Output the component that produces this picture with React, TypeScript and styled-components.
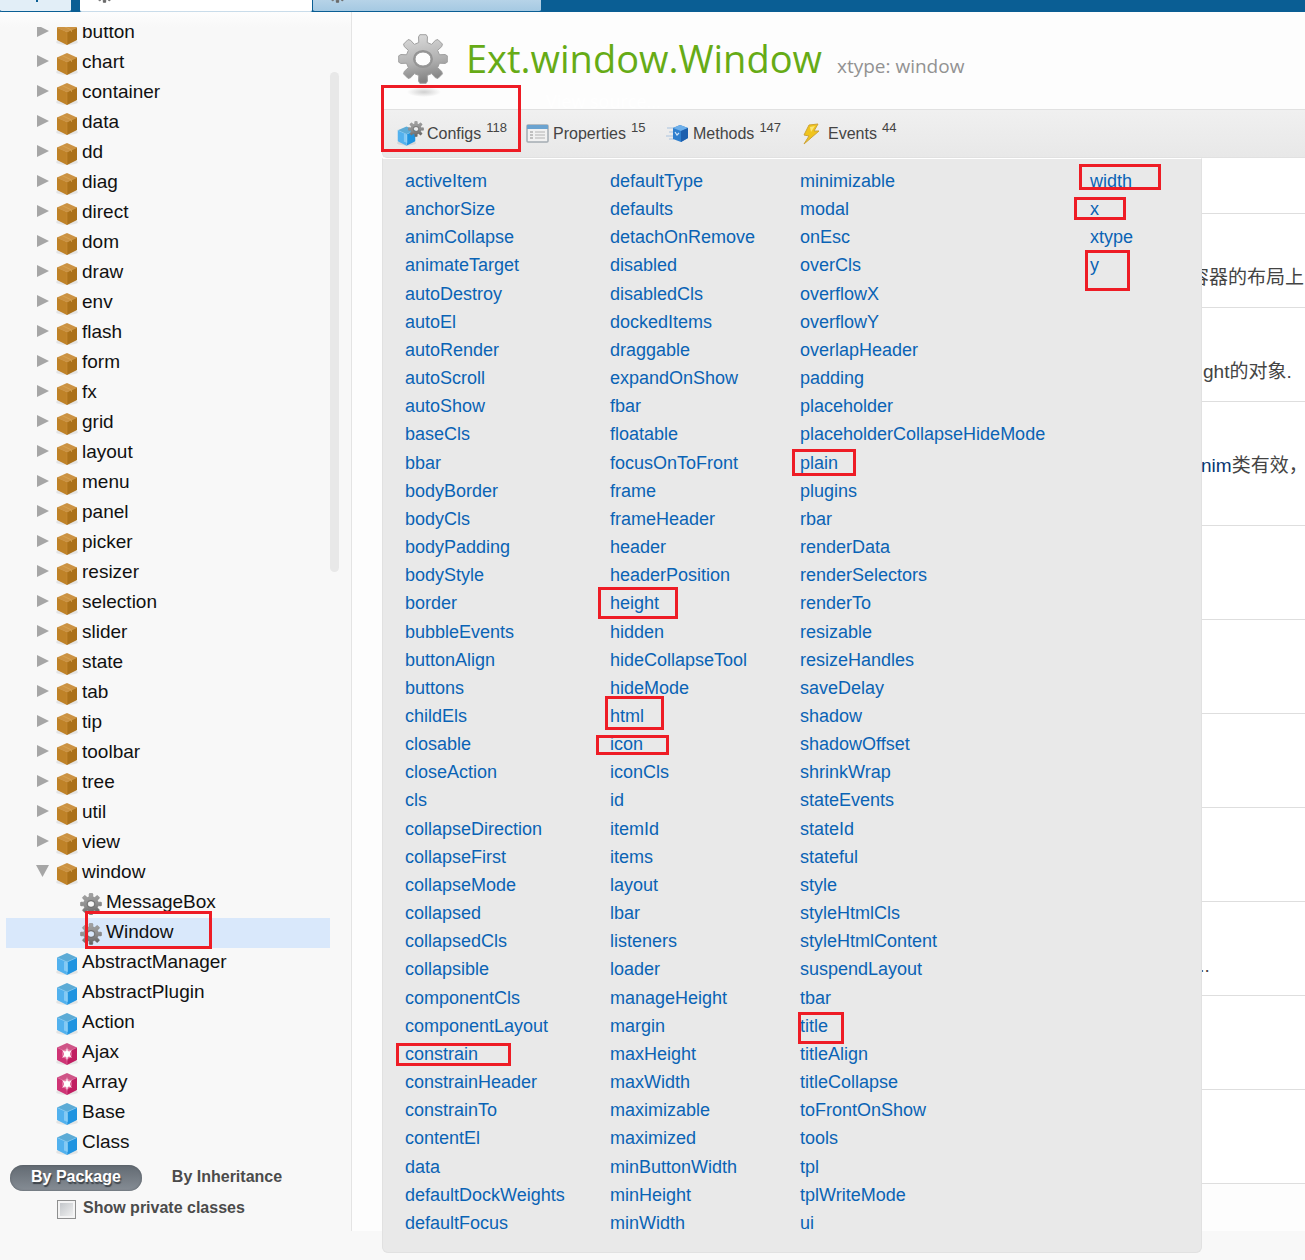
import React from 'react';
import styled, { createGlobalStyle } from 'styled-components';

const GlobalStyle = createGlobalStyle`
  * { box-sizing: border-box; }
  body { margin: 0; background: #f8f8f8; font-family: "Liberation Sans", Arial, "Noto Sans CJK SC", sans-serif; }
  ul { list-style: none; margin: 0; padding: 0; }
  a { text-decoration: none; color: inherit; }
  button { font: inherit; border: 0; background: none; padding: 0; cursor: pointer; }
`;

const MARK = '#ee1c25';

const Page = styled.div`
  position: relative;
  display: flex;
  flex-direction: column;
  min-height: 100vh;
  overflow: hidden;
`;

const TabBar = styled.nav`
  display: flex;
  align-items: stretch;
  height: 12px;
  background: #0a5e94;
`;

const Tab = styled.button<{ $width: number; $bg: string; $edge: string }>`
  display: flex;
  align-items: flex-start;
  width: ${(p) => p.$width}px;
  padding-left: 16px;
  background: ${(p) => p.$bg};
  border-bottom: 1px solid ${(p) => p.$edge};
  border-radius: 0 0 2px 2px;
  overflow: hidden;
  svg { flex: none; margin-top: -14px; }
`;

const TabGap = styled.span<{ $width: number }>`
  width: ${(p) => p.$width}px;
`;

const Body = styled.div`
  display: flex;
  flex: 1;
  align-items: flex-start;
`;

const Sidebar = styled.aside`
  display: flex;
  flex-direction: column;
  flex: 0 0 352px;
  height: 1219px;
  padding-top: 15px;
  border-right: 1px solid #e4e4e4;
  background: linear-gradient(#fdfdfd, #f8f8f8 15px);
`;

const TreeView = styled.div`
  display: flex;
  height: 1131px;
  padding-left: 6px;
  overflow: hidden;
`;

const Tree = styled.ul`
  flex: 0 0 324px;
  margin-top: -9px;
`;

const TreeRow = styled.li<{ $depth: number; $selected?: boolean }>`
  display: flex;
  align-items: center;
  height: 30px;
  padding-left: ${(p) => 28 + p.$depth * 24}px;
  background: ${(p) => (p.$selected ? '#d9e8fb' : 'transparent')};
  color: #111;
  font-size: 19px;
  line-height: 28px;
`;

const Arrow = styled.span`
  flex: 0 0 20px;
  height: 16px;
  display: flex;
`;

const IconCell = styled.span`
  flex: 0 0 28px;
  display: flex;
  justify-content: center;
  padding: 2px 2px 0 0;
`;

const TreeLink = styled.a`
  padding-bottom: 2px;
`;

const ScrollThumb = styled.div`
  width: 9px;
  height: 500px;
  margin-top: 45px;
  border-radius: 5px;
  background: #e8e8e8;
`;

const Grouping = styled.div`
  display: flex;
  gap: 9px;
  padding: 7px 10px 0;
`;

const GroupButton = styled.button<{ $active?: boolean }>`
  height: 26px;
  padding: 0 21px 2px;
  border-radius: 13px;
  font-size: 16px;
  font-weight: bold;
  color: ${(p) => (p.$active ? '#fff' : '#4b4b4b')};
  background: ${(p) => (p.$active ? 'linear-gradient(#626a72, #868d95)' : 'none')};
  box-shadow: ${(p) => (p.$active ? 'inset 0 0 2px #4c535a' : 'none')};
  text-shadow: ${(p) => (p.$active ? '1px 2px 1px #3c4248' : 'none')};
`;

const PrivateOption = styled.label`
  display: flex;
  align-items: center;
  gap: 7px;
  padding: 5px 0 0 57px;
  font-size: 16px;
  line-height: 24px;
  font-weight: bold;
  color: #4b4b4b;
`;

const Checkbox = styled.input`
  appearance: none;
  width: 19px;
  height: 19px;
  margin: 2px 0 0;
  border: 1px solid #8e8f8f;
  outline: 2px solid #f4f4f4;
  outline-offset: -3px;
  background: linear-gradient(135deg, #bcc0c4, #f6f6f6);
`;

const Main = styled.main`
  flex: 1;
  min-width: 0;
  height: 1219px;
  padding-left: 30px;
  background: #fdfdfd;
`;

const Header = styled.header`
  display: flex;
  align-items: flex-start;
  height: 97px;
  padding: 20px 0 0 14px;
`;

const Titles = styled.div`
  display: flex;
  flex-direction: column;
  padding-left: 16px;
`;

const TitleLine = styled.div`
  display: flex;
  align-items: baseline;
  gap: 15px;
  font-family: "Open Sans", "Noto Sans", sans-serif;
  line-height: 52px;
`;

const Title = styled.h1`
  margin: 0;
  font-size: 38px;
  font-weight: 400;
  color: #66ab16;
`;

const XType = styled.span`
  font-size: 19px;
  color: #929292;
`;

const SourceLink = styled.a`
  padding-left: 80px;
  font-family: "Open Sans", sans-serif;
  font-size: 18px;
  line-height: 18px;
  && { color: #fff; }
`;

const MemberArea = styled.div`
  position: relative;
`;

const Toolbar = styled.div`
  display: flex;
  align-items: center;
  height: 49px;
  padding-left: 13px;
  border: solid #e1e1e1;
  border-width: 1px 0 1px 1px;
  border-radius: 0 0 0 5px;
  background: linear-gradient(#f0f0f0, #e8e8e8);
`;

const MemberButton = styled.button<{ $width: number }>`
  display: flex;
  align-items: center;
  width: ${(p) => p.$width}px;
  height: 28px;
  color: #444;
  font-size: 16px;
  line-height: 20px;
  white-space: nowrap;
`;

const MemberIcon = styled.span`
  flex: none;
  display: flex;
  margin-right: 3px;
`;

const Count = styled.sup`
  align-self: flex-start;
  margin: 2px 0 0 5px;
  font-size: 13px;
  line-height: 12px;
`;

const Panel = styled.div`
  position: absolute;
  top: 49px;
  left: 0;
  z-index: 1;
  display: grid;
  grid-template-columns: 205px 190px 290px 112px;
  width: 820px;
  padding: 9px 0 14px 22px;
  border: 1px solid #e1e1e1;
  border-top-color: #fff;
  border-radius: 0 0 6px 6px;
  background: #e9e9e9;
`;

const Column = styled.ul`
  display: grid;
  grid-template-rows: repeat(38, 1fr);
  height: 1070px;
  color: #0a63b5;
  font-size: 18px;
  line-height: 26px;
`;

const Docs = styled.div`
  background: #fff;
`;

const DocRow = styled.section<{ $height: number; $indent: number }>`
  display: flex;
  align-items: flex-end;
  height: ${(p) => p.$height}px;
  padding: 0 0 13px ${(p) => p.$indent}px;
  border-bottom: 1px solid #dedede;
  color: #444;
  font-size: 19px;
  line-height: 32px;
  white-space: nowrap;
`;

const DocText = styled.p<{ $raised?: boolean }>`
  margin: 0;
  padding-bottom: ${(p) => (p.$raised ? 30 : 0)}px;
  a { color: #083772; }
`;

const Highlight = styled.span<{ $box: number[] }>`
  position: absolute;
  z-index: 2;
  left: ${(p) => p.$box[0]}px;
  top: ${(p) => p.$box[1]}px;
  width: ${(p) => p.$box[2]}px;
  height: ${(p) => p.$box[3]}px;
  border: 3px solid ${MARK};
  pointer-events: none;
`;

function gearPath(c: number, outer: number, inner: number) {
  const pts: string[] = [];
  for (let i = 0; i < 8; i++) {
    const a = (i * Math.PI) / 4 - Math.PI / 2;
    for (const [d, r] of [[-0.25, inner], [-0.2, outer - 2], [-0.13, outer], [0.13, outer], [0.2, outer - 2], [0.25, inner]]) {
      pts.push(`${(c + r * Math.cos(a + d)).toFixed(2)} ${(c + r * Math.sin(a + d)).toFixed(2)}`);
    }
  }
  return `M${pts.join('L')}Z`;
}

const Gear = ({ size, dark }: { size: number; dark?: boolean }) => {
  const id = dark ? 'gearDark' : 'gearLight';
  return (
    <svg width={size} height={size} viewBox="0 0 50 50" aria-hidden="true">
      <defs>
        <linearGradient id={id} x1="0.2" y1="0" x2="0.4" y2="1">
          <stop offset="0" stopColor={dark ? '#a6a6a6' : '#dcdcdc'} />
          <stop offset="0.6" stopColor={dark ? '#8c8c8c' : '#b0b0b0'} />
          <stop offset="1" stopColor={dark ? '#626262' : '#808080'} />
        </linearGradient>
      </defs>
      <path
        fillRule="evenodd"
        fill={`url(#${id})`}
        stroke={dark ? '#808080' : '#a0a0a0'}
        strokeWidth="1"
        strokeLinejoin="round"
        d={gearPath(25, 24.5, 17) + 'M25 18a8 7 0 1 0 0 14a8 7 0 1 0 0-14Z'}
      />
      <ellipse cx="25" cy="25" rx="9" ry="8" fill="none" stroke={dark ? '#6c6c6c' : '#949494'} strokeWidth="2" />
    </svg>
  );
};

const BigGear = () => (
  <svg width="54" height="66" viewBox="0 0 54 66" aria-hidden="true">
    <defs>
      <radialGradient id="gearShadow">
        <stop offset="0" stopColor="#d0d0d0" />
        <stop offset="1" stopColor="#fdfdfd" />
      </radialGradient>
    </defs>
    <ellipse cx="28" cy="60" rx="17" ry="5" fill="url(#gearShadow)" />
    <svg x="2" y="2" width="50" height="50"><Gear size={50} /></svg>
  </svg>
);

const cubes = {
  box: { top: '#cb9242', left: '#bf8227', right: '#ab7119', edge: '#c98d38' },
  blue: { top: '#5cabd6', left: '#52b1ee', right: '#2094e0', edge: '#86cbf3' },
  pink: { top: '#cf5487', left: '#cf3475', right: '#c01c60', edge: '#dc6b9a' },
};

const Cube = ({ kind, size = 24 }: { kind: keyof typeof cubes; size?: number }) => {
  const c = cubes[kind];
  return (
    <svg width={size} height={size} viewBox="0 0 24 24" aria-hidden="true">
      <ellipse cx="12" cy="20" rx="11" ry="3" fill="#000" opacity="0.08" />
      <path d="M12 1L22 5.500L12 10L2 5.500Z" fill={c.top} />
      <path d="M2 5.500L12 10V23L2 18Z" fill={c.left} />
      <path d="M22 5.500L12 10V23L22 18Z" fill={c.right} />
      <path d="M2 5.500L12 10L22 5.500M12 10V23" fill="none" stroke={c.edge} strokeWidth="0.600" />
      {kind === 'box' && <path d="M7 3.500L16.500 8V10" fill="none" stroke="#dba956" strokeWidth="1" opacity="0.7" />}
      {kind === 'blue' && <path d="M9 9.500L13 10.500V20L9 18.500Z" fill="#b4e2fb" opacity="0.5" />}
      {kind === 'pink' && (
        <>
          <circle cx="12" cy="12" r="5" fill="#f49cbf" opacity="0.6" />
          <path d="M12 5L13 10L17 8L14.500 12L17 16L13 14L12 19L11 14L7 16L9.500 12L7 8L11 10Z" fill="#fff" opacity="0.9" />
          <circle cx="12" cy="12" r="3" fill="#fff" />
        </>
      )}
    </svg>
  );
};

const ConfigsIcon = () => (
  <svg width="28" height="28" viewBox="0 0 28 28" aria-hidden="true">
    <svg x="0" y="5" width="21" height="22" viewBox="0 0 24 24"><Cube kind="blue" /></svg>
    <svg x="12" y="1" width="16" height="16" viewBox="0 0 50 50"><Gear size={50} dark /></svg>
  </svg>
);

const PropertiesIcon = () => (
  <svg width="24" height="22" viewBox="0 0 24 22" aria-hidden="true">
    <rect x="1" y="2" width="21" height="17" rx="1" fill="#f1f1f1" stroke="#a4acb3" strokeWidth="1.500" />
    <path d="M1 2H22V6H1Z" fill="#6ba3d0" />
    <path d="M4 9H7M4 12H7M4 15H7" stroke="#b0b0b0" strokeWidth="1.500" />
    <path d="M9 9H19M9 12H19M9 15H19" stroke="#c8c8c8" strokeWidth="1.500" />
  </svg>
);

const MethodsIcon = () => (
  <svg width="24" height="20" viewBox="0 0 24 20" aria-hidden="true">
    <path d="M1 4H8M3 8H8M0 12H8M3 15H8" stroke="#a9c3e0" strokeWidth="1.200" />
    <path d="M14 1L22 4V14L15 18L7 15V4Z" fill="#2f7fce" />
    <path d="M14 1L22 4L15 7L7 4Z" fill="#6fb0ea" />
    <path d="M15 7L22 4V14L15 18Z" fill="#1c5fae" />
    <path d="M9 8L11 11L13 9" stroke="#cfe5fa" strokeWidth="1.200" fill="none" />
  </svg>
);

const EventsIcon = () => (
  <svg width="24" height="24" viewBox="0 0 24 24" aria-hidden="true">
    <path d="M8 3L17 2L13 9L18 9L3 22L8 14L3 13Z" fill="#f0c41d" stroke="#cda436" strokeWidth="1" strokeLinejoin="round" />
    <path d="M9 5L14 4L10 10" fill="#fbe678" />
  </svg>
);

const HomeIcon = () => (
  <svg width="20" height="16" viewBox="0 0 20 16" aria-hidden="true">
    <path d="M2 8L10 1L18 8H15V14H11V16H9V14H5V8Z" fill="#0a5e94" />
  </svg>
);

const packages = 'button chart container data dd diag direct dom draw env flash form fx grid layout menu panel picker resizer selection slider state tab tip toolbar tree util view window'.split(' ');
const classes: [string, 'blue' | 'pink'][] = [
  ['AbstractManager', 'blue'], ['AbstractPlugin', 'blue'], ['Action', 'blue'],
  ['Ajax', 'pink'], ['Array', 'pink'], ['Base', 'blue'], ['Class', 'blue'],
];

const configs = [
  'activeItem anchorSize animCollapse animateTarget autoDestroy autoEl autoRender autoScroll autoShow baseCls bbar bodyBorder bodyCls bodyPadding bodyStyle border bubbleEvents buttonAlign buttons childEls closable closeAction cls collapseDirection collapseFirst collapseMode collapsed collapsedCls collapsible componentCls componentLayout constrain constrainHeader constrainTo contentEl data defaultDockWeights defaultFocus',
  'defaultType defaults detachOnRemove disabled disabledCls dockedItems draggable expandOnShow fbar floatable focusOnToFront frame frameHeader header headerPosition height hidden hideCollapseTool hideMode html icon iconCls id itemId items layout lbar listeners loader manageHeight margin maxHeight maxWidth maximizable maximized minButtonWidth minHeight minWidth',
  'minimizable modal onEsc overCls overflowX overflowY overlapHeader padding placeholder placeholderCollapseHideMode plain plugins rbar renderData renderSelectors renderTo resizable resizeHandles saveDelay shadow shadowOffset shrinkWrap stateEvents stateId stateful style styleHtmlCls styleHtmlContent suspendLayout tbar title titleAlign titleCollapse toFrontOnShow tools tpl tplWriteMode ui',
  'width x xtype y',
].map((names) => names.split(' '));

const members = [
  { name: 'Configs', count: 118, width: 130, icon: <ConfigsIcon /> },
  { name: 'Properties', count: 15, width: 140, icon: <PropertiesIcon /> },
  { name: 'Methods', count: 147, width: 135, icon: <MethodsIcon /> },
  { name: 'Events', count: 44, width: 110, icon: <EventsIcon /> },
];

const docs: { height: number; indent: number; text?: React.ReactNode; raised?: boolean }[] = [
  { height: 56, indent: 0 },
  { height: 94, indent: 808, text: '容器的布局上' },
  { height: 94, indent: 821, text: 'ght的对象.' },
  { height: 124, indent: 819, text: <><a href="#anim">nim</a>类有效，</>, raised: true },
  { height: 94, indent: 0 },
  { height: 94, indent: 0 },
  { height: 94, indent: 0 },
  { height: 94, indent: 0 },
  { height: 94, indent: 812, text: '...' },
  { height: 94, indent: 0 },
  { height: 94, indent: 0 },
];

const highlights = [
  [381, 85, 140, 67], [1079, 164, 82, 26], [1074, 197, 52, 23], [1085, 250, 45, 41],
  [792, 449, 64, 27], [598, 587, 80, 32], [605, 696, 59, 34], [596, 735, 73, 20],
  [396, 1043, 115, 23], [798, 1012, 46, 32], [85, 911, 127, 38],
];

export default function App() {
  return (
    <Page>
      <GlobalStyle />
      <TabBar>
        <Tab $width={71} $bg="#e2eef7" $edge="#0a5e94" aria-label="Home"><TabGap $width={11} /><HomeIcon /></Tab>
        <TabGap $width={9} />
        <Tab $width={232} $bg="#fff" $edge="#c9dcea" aria-label="Ext.window.Window"><Gear size={17} dark /></Tab>
        <TabGap $width={1} />
        <Tab $width={228} $bg="linear-gradient(#b6d3e8, #a5c9e2)" $edge="#0a5e94" aria-label="Class"><Gear size={17} dark /></Tab>
      </TabBar>
      <Body>
        <Sidebar>
          <TreeView>
            <Tree>
              {packages.map((name) => (
                <TreeRow key={name} $depth={0}>
                  <Arrow>
                    <svg width="16" height="14" viewBox="0 0 16 14" aria-hidden="true">
                      <path d={name === 'window' ? 'M2 0H15L8.500 12Z' : 'M3 0L15 6L3 12Z'} fill="#a6a6a6" />
                    </svg>
                  </Arrow>
                  <IconCell><Cube kind="box" /></IconCell>
                  <TreeLink href={`#${name}`}>{name}</TreeLink>
                </TreeRow>
              ))}
              {['MessageBox', 'Window'].map((name) => (
                <TreeRow key={name} $depth={1} $selected={name === 'Window'}>
                  <Arrow />
                  <IconCell><Gear size={22} dark /></IconCell>
                  <TreeLink href={`#${name}`}>{name}</TreeLink>
                </TreeRow>
              ))}
              {classes.map(([name, kind]) => (
                <TreeRow key={name} $depth={0}>
                  <Arrow />
                  <IconCell><Cube kind={kind} /></IconCell>
                  <TreeLink href={`#${name}`}>{name}</TreeLink>
                </TreeRow>
              ))}
            </Tree>
            <ScrollThumb />
          </TreeView>
          <Grouping>
            <GroupButton $active>By Package</GroupButton>
            <GroupButton>By Inheritance</GroupButton>
          </Grouping>
          <PrivateOption>
            <Checkbox type="checkbox" />
            Show private classes
          </PrivateOption>
        </Sidebar>
        <Main>
          <Header>
            <BigGear />
            <Titles>
              <TitleLine>
                <Title>Ext.window.Window</Title>
                <XType>xtype: window</XType>
              </TitleLine>
              <SourceLink href="#source">View source...</SourceLink>
            </Titles>
          </Header>
          <MemberArea>
            <Toolbar>
              {members.map((m) => (
                <MemberButton key={m.name} $width={m.width}>
                  <MemberIcon>{m.icon}</MemberIcon>
                  {m.name}
                  <Count>{m.count}</Count>
                </MemberButton>
              ))}
            </Toolbar>
            <Panel>
              {configs.map((names) => (
                <Column key={names[0]}>
                  {names.map((name) => (
                    <li key={name}><a href={`#cfg-${name}`}>{name}</a></li>
                  ))}
                </Column>
              ))}
            </Panel>
            <Docs>
              {docs.map((d, i) => (
                <DocRow key={i} $height={d.height} $indent={d.indent}>
                  {d.text && <DocText $raised={d.raised}>{d.text}</DocText>}
                </DocRow>
              ))}
            </Docs>
          </MemberArea>
        </Main>
      </Body>
      {highlights.map((box) => <Highlight key={box.join()} $box={box} />)}
    </Page>
  );
}
